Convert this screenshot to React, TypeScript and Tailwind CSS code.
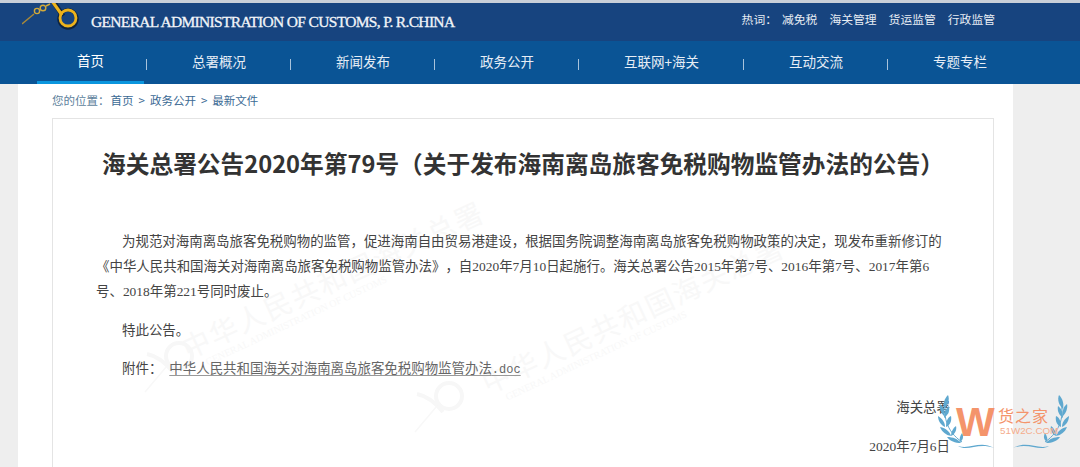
const cjk = { fontFamily: '"Noto Sans CJK SC", sans-serif' };
const bodyFont = { fontFamily: '"Liberation Serif", "Noto Sans CJK SC", serif' };

const navItems = ['首页', '总署概况', '新闻发布', '政务公开', '互联网+海关', '互动交流', '专题专栏'];
const hotWords = ['减免税', '海关管理', '货运监管', '行政监管'];

function KeyLogo() {
  return (
    <svg width="62" height="38" viewBox="0 0 62 38" className="shrink-0" fill="none">
      <path d="M0 21 L12 11" stroke="#a8893a" strokeWidth="1.4" />
      <circle cx="15" cy="8" r="2.6" stroke="#d2aa3a" strokeWidth="1.4" />
      <circle cx="21" cy="5" r="2.8" stroke="#d2aa3a" strokeWidth="1.4" />
      <path d="M24 3 L28 1" stroke="#d2aa3a" strokeWidth="1.4" />
      <path d="M31 -2 L41 13" stroke="#0e2440" strokeWidth="5" />
      <circle cx="46" cy="16" r="9" stroke="#0e2440" strokeWidth="3.5" />
      <path d="M30 -2 L40 12" stroke="#edb31c" strokeWidth="3.2" />
      <circle cx="46" cy="15" r="8" stroke="#edb31c" strokeWidth="2.8" />
    </svg>
  );
}

function Laurel({ flip }: { flip?: boolean }) {
  return (
    <svg width="60" height="60" viewBox="0 0 60 60" fill="none" className={flip ? '-scale-x-100' : ''}>
      <path d="M11 3 C6 20 10 36 26 47" stroke="#62a9cf" strokeWidth="1" />
      <path d="M12 0 C8 4 7 9 8 14 C12 10 14 5 12 0Z" fill="#5fa8cf" />
      <path d="M4 9 C3 13 5 18 8 21 C9 17 8 12 4 9Z" fill="#5fa8cf" />
      <path d="M13 11 C9 14 8 18 8 23 C12 20 14 16 13 11Z" fill="#5fa8cf" />
      <path d="M2 21 C2 26 5 30 9 32 C9 28 7 24 2 21Z" fill="#5fa8cf" />
      <path d="M15 21 C11 23 10 27 10 32 C14 30 16 26 15 21Z" fill="#5fa8cf" />
      <path d="M4 32 C6 37 10 40 15 41 C14 37 10 33 4 32Z" fill="#5fa8cf" />
      <path d="M20 31 C17 33 15 37 15 41 C19 39 21 35 20 31Z" fill="#5fa8cf" />
      <path d="M11 42 C14 46 19 48 25 48 C22 44 17 42 11 42Z" fill="#5fa8cf" />
      <path d="M26 38 C24 41 23 44 24 47 C27 45 28 42 26 38Z" fill="#5fa8cf" />
      <path d="M22 51 C32 57 42 47 58 53 C44 45 34 55 22 51Z" fill="#5fa8cf" />
    </svg>
  );
}

function Watermark() {
  return (
    <div className="absolute left-[936px] top-[395px] w-[135px] h-[72px]">
      <div className="absolute left-0 top-0"><Laurel /></div>
      <div className="absolute right-0 top-0"><Laurel flip /></div>
      <span className="absolute left-[20px] top-[5px] text-[41px] leading-[44px] font-bold text-[#f4946b]" style={{ fontFamily: '"Liberation Sans", sans-serif' }}>W</span>
      <span className="absolute left-[62px] top-[10px] text-[16px] leading-[20px] tracking-[1px] text-[#f4946b] whitespace-nowrap" style={cjk}>货之家</span>
      <span className="absolute left-[64px] top-[30px] text-[9.8px] leading-[12px] text-[#f5ac8c] whitespace-nowrap" style={{ fontFamily: '"Liberation Sans", sans-serif' }}>51W2C.COM</span>
    </div>
  );
}

function FaintMark({ className }: { className: string }) {
  return (
    <div className={`absolute w-[330px] -rotate-[25deg] text-[#f8f8f8] whitespace-nowrap pointer-events-none ${className}`}>
      <div className="text-[28px] leading-[34px] tracking-[2px]" style={cjk}>中华人民共和国海关总署</div>
      <div className="ml-[15px] text-[10px] leading-[12px]" style={{ fontFamily: '"Liberation Serif", serif' }}>GENERAL ADMINISTRATION OF CUSTOMS</div>
    </div>
  );
}

function FaintEmblem({ className }: { className: string }) {
  return (
    <svg width="56" height="60" viewBox="0 0 56 60" fill="none" className={`absolute ${className}`}>
      <path d="M2 58 L24 32" stroke="#f8f8f8" strokeWidth="1.5" />
      <path d="M4 20 C14 22 22 28 30 38" stroke="#f7f7f7" strokeWidth="4" />
      <circle cx="36" cy="22" r="13" stroke="#f7f7f7" strokeWidth="4" />
    </svg>
  );
}

export default function App() {
  return (
    <div className="relative w-[1080px] h-[467px] overflow-hidden bg-[#eeeeee] [text-spacing-trim:space-all]" style={cjk}>
      <div className="h-[3px] bg-[#c9cfd8]" />
      <header className="h-[38px] bg-[#17447f] flex items-center justify-between pl-[22px] pr-[85px] overflow-hidden">
        <div className="flex items-center">
          <KeyLogo />
          <span
            className="ml-[7px] text-[15.5px] tracking-[-0.67px] text-[#f2f5f9] whitespace-nowrap [-webkit-text-stroke:0.3px_#f2f5f9]"
            style={{ fontFamily: '"Liberation Serif", serif' }}
          >
            GENERAL ADMINISTRATION OF CUSTOMS, P. R.CHINA
          </span>
        </div>
        <div className="flex items-center gap-[12px] text-[11.8px] text-[#e8edf4] -mt-[6px]">
          <span className="-mr-[7px]">热词：</span>
          {hotWords.map(w => <span key={w}>{w}</span>)}
        </div>
      </header>
      <nav className="h-[43px] bg-[#0a5495] flex items-stretch pl-[37px] text-[13.5px] text-[#e6edf5]">
        {navItems.map((item, i) => (
          <div key={item} className="flex items-stretch">
            <div className={`flex items-center pb-[2px] ${i === 0 ? 'px-[40px] border-b-[3px] border-[#0a96de] text-white' : 'pl-[45px] pr-[42px]'}`}>
              {item}
            </div>
            {i < navItems.length - 1 && (
              <div className="flex items-center ml-[2px]">
                <div className="w-px h-[11px] mt-[4px] bg-[#a9c3dc]" />
              </div>
            )}
          </div>
        ))}
      </nav>
      <main className="relative ml-[18px] w-[995px] h-[383px] bg-white pl-[34px] pr-[19px] overflow-hidden">
        <FaintMark className="left-[152px] top-[177px]" />
        <FaintMark className="left-[452px] top-[212px]" />
        <FaintEmblem className="left-[125px] top-[250px]" />
        <FaintEmblem className="left-[395px] top-[290px]" />
        <div className="h-[34px] flex items-center text-[11.5px] text-[#3b6a94] gap-[5px]">
          <span className="text-[#5d7f9c] -mr-[4px]">您的位置：</span>
          <span>首页</span><span>&gt;</span><span>政务公开</span><span>&gt;</span><span>最新文件</span>
        </div>
        <article className="relative border border-[#e4e4e4] h-[360px] text-[13.45px] text-[#444444]">
          <h1 className="mt-[26px] text-center text-[23.7px] leading-[36px] font-bold text-[#333333] whitespace-nowrap">
            海关总署公告2020年第79号（关于发布海南离岛旅客免税购物监管办法的公告）
          </h1>
          <div className="mt-[48px] pl-[69px] leading-[25px] relative" style={bodyFont}>
            <p className="whitespace-nowrap">为规范对海南离岛旅客免税购物的监管，促进海南自由贸易港建设，根据国务院调整海南离岛旅客免税购物政策的决定，现发布重新修订的</p>
            <p className="whitespace-nowrap -ml-[26px]">《中华人民共和国海关对海南离岛旅客免税购物监管办法》，自2020年7月10日起施行。海关总署公告2015年第7号、2016年第7号、2017年第6</p>
            <p className="whitespace-nowrap -ml-[26px]">号、2018年第221号同时废止。</p>
            <p className="mt-[14px]">特此公告。</p>
            <p className="mt-[13px]">
              附件：
              <span className="ml-[7px] underline underline-offset-2 decoration-[#999999] text-[#666666]">
                中华人民共和国海关对海南离岛旅客免税购物监管办法<span className="font-['Liberation_Mono'] text-[12px]">.doc</span>
              </span>
            </p>
          </div>
          <div className="mt-[12px] pr-[43px] text-right leading-[25px]" style={bodyFont}>海关总署</div>
          <div className="mt-[14px] pr-[43px] text-right leading-[25px]" style={bodyFont}>2020年7月6日</div>
        </article>
      </main>
      <Watermark />
    </div>
  );
}
